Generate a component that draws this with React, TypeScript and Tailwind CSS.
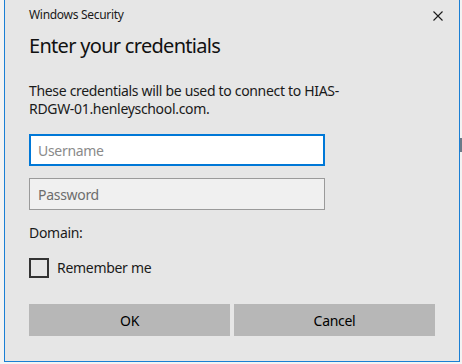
import React from "react";

export default function App() {
  const font = { fontFamily: '"Noto Sans", "Liberation Sans", sans-serif' };
  return (
    <div className="w-[462px] h-[364px] bg-[#f3f3f3] pl-[4px] pr-[2px] pb-[2px] relative" style={font}>
      <div className="w-[456px] h-[362px] bg-[#e6e6e6] border-l border-r border-b border-[#1a7fd4] flex flex-col pl-[24px] pr-[24px] text-black">
        <div className="flex items-start justify-between h-[30px] pt-[7px]">
          <span className="text-[12px] leading-[16px] tracking-[-0.3px] text-[#1a1a1a]">Windows Security</span>
          <svg width="10" height="10" viewBox="0 0 10 10" className="mt-[4px] mr-[-8px]">
            <path d="M0.5 0.5 L9.5 9.5 M9.5 0.5 L0.5 9.5" stroke="#1a1a1a" strokeWidth="1.1" />
          </svg>
        </div>
        <div className="text-[20px] leading-[28px] mt-[2px] tracking-[-0.7px] text-[#111]">Enter your credentials</div>
        <div className="text-[14px] leading-[18px] mt-[22px] w-[330px] tracking-[-0.32px] text-[#1a1a1a]">
          These credentials will be used to connect to HIAS-RDGW-01.henleyschool.com.
        </div>
        <div className="mt-[16px] w-[296px] h-[32px] bg-white border-2 border-[#0078d7] flex items-center pl-[7px] text-[14px] tracking-[-0.3px] text-[#8a8a8a]">
          Username
        </div>
        <div className="mt-[12px] w-[296px] h-[32px] bg-[#f0f0f0] border border-[#9a9a9a] flex items-center pl-[8px] text-[14px] tracking-[-0.3px] text-[#6d6d6d]">
          Password
        </div>
        <div className="mt-[14px] text-[14px] leading-[18px] tracking-[-0.3px] text-[#1a1a1a]">Domain:</div>
        <div className="mt-[16px] flex items-center gap-[8px]">
          <div className="w-[20px] h-[20px] border-2 border-[#333]" />
          <span className="text-[14px] leading-[18px] tracking-[-0.3px] text-[#1a1a1a]">Remember me</span>
        </div>
        <div className="mt-[26px] flex gap-[4px]">
          <div className="w-[201px] h-[32px] bg-[#b7b7b7] flex items-center justify-center text-[14px] tracking-[-0.3px] text-black">OK</div>
          <div className="w-[201px] h-[32px] bg-[#b7b7b7] flex items-center justify-center text-[14px] tracking-[-0.3px] text-black">Cancel</div>
        </div>
      </div>
      <div className="absolute right-0 top-[138px] w-[2px] h-[14px] bg-[#6b7a88]" />
    </div>
  );
}
